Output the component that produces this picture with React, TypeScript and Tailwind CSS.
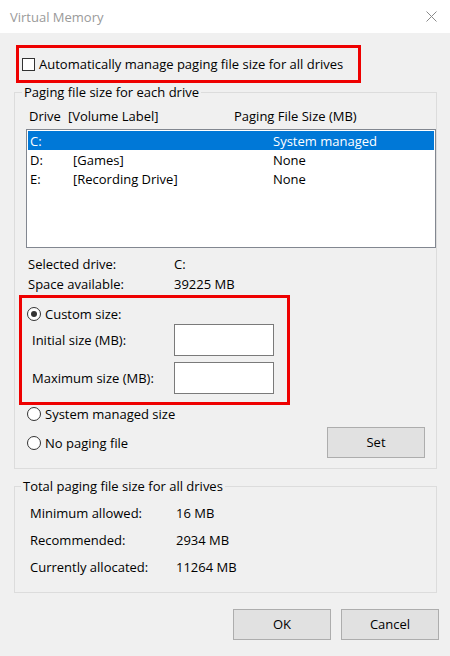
import React from "react";

const font = { fontFamily: '"Open Sans", "Noto Sans", sans-serif' };

function CheckBox() {
  return <span className="block w-[13px] h-[13px] border border-[#333333] bg-white shrink-0" />;
}

function Radio({ checked = false }: { checked?: boolean }) {
  return (
    <span className="flex items-center justify-center w-[14px] h-[14px] rounded-full border border-[#333333] bg-white shrink-0">
      {checked && <span className="block w-[6px] h-[6px] rounded-full bg-[#333333]" />}
    </span>
  );
}

function WinButton({ children }: { children: React.ReactNode }) {
  return (
    <button className="w-[98px] h-[31px] border border-[#adadad] bg-[#e1e1e1] text-black leading-none">
      {children}
    </button>
  );
}

const drives = [
  { letter: "C:", label: "", size: "System managed", selected: true },
  { letter: "D:", label: "[Games]", size: "None", selected: false },
  { letter: "E:", label: "[Recording Drive]", size: "None", selected: false },
];

export default function App() {
  return (
    <div
      className="w-[450px] h-[656px] bg-[#f0f0f0] text-black text-[13px] leading-[18px] flex flex-col overflow-hidden"
      style={font}
    >
      {/* Title bar */}
      <div className="h-[33px] bg-white flex items-center justify-between pl-[10px] pr-[13px] shrink-0">
        <span className="text-[#9a9a9a]">Virtual Memory</span>
        <svg width="11" height="11" viewBox="0 0 11 11" className="text-[#8a8a8a]">
          <path d="M0.5 0.5 L10.5 10.5 M10.5 0.5 L0.5 10.5" stroke="currentColor" strokeWidth="1" />
        </svg>
      </div>

      <div className="flex flex-col pl-[14px] pr-[13px]">
        {/* Auto manage */}
        <div className="mt-[12px] ml-[2px] w-[345px] h-[38px] border-[3px] border-[#ee0000] flex items-center pl-[3px] gap-[4px]">
          <CheckBox />
          <span>Automatically manage paging file size for all drives</span>
        </div>

        {/* Paging file size for each drive */}
        <fieldset className="border border-[#dcdcdc] pb-[10px]">
          <legend className="ml-[7px] px-[2px]">Paging file size for each drive</legend>
          <div className="mt-[6px] pl-[14px] flex h-[18px] items-center">
            <span className="w-[39px]">Drive</span>
            <span className="w-[166px]">[Volume Label]</span>
            <span>Paging File Size (MB)</span>
          </div>
          <div className="mt-[4px] ml-[11px] w-[410px] h-[119px] border border-[#828790] bg-white p-[1px]">
            {drives.map((d) => (
              <div
                key={d.letter}
                className={`h-[19px] flex items-center pl-[2px] ${d.selected ? "bg-[#0078d7] text-white" : ""}`}
              >
                <span className="w-[43px]">{d.letter}</span>
                <span className="w-[200px]">{d.label}</span>
                <span>{d.size}</span>
              </div>
            ))}
          </div>

          <div className="mt-[6px] pl-[13px] flex h-[20px] items-center">
            <span className="w-[146px]">Selected drive:</span>
            <span>C:</span>
          </div>
          <div className="pl-[13px] flex h-[20px] items-center">
            <span className="w-[146px]">Space available:</span>
            <span>39225 MB</span>
          </div>

          {/* Custom size */}
          <div className="mt-[1px] ml-[4px] w-[271px] h-[110px] border-[3px] border-[#ee0000] pt-[6px] pb-[8px]">
            <div className="h-[20px] flex items-center pl-[5px] gap-[4px]">
              <Radio checked />
              <span>Custom size:</span>
            </div>
            <div className="h-[32px] flex items-center pl-[10px]">
              <span className="w-[142px]">Initial size (MB):</span>
              <input className="w-[100px] h-[32px] border border-[#7a7a7a] bg-white outline-none" />
            </div>
            <div className="mt-[6px] h-[32px] flex items-center pl-[10px]">
              <span className="w-[142px]">Maximum size (MB):</span>
              <input className="w-[100px] h-[32px] border border-[#7a7a7a] bg-white outline-none" />
            </div>
          </div>

          <div className="h-[18px] flex items-center pl-[12px] gap-[4px]">
            <Radio />
            <span>System managed size</span>
          </div>
          <div className="mt-[4px] h-[31px] flex items-center justify-between pl-[12px] pr-[11px]">
            <div className="flex items-center gap-[4px]">
              <Radio />
              <span>No paging file</span>
            </div>
            <WinButton>Set</WinButton>
          </div>
        </fieldset>

        {/* Totals */}
        <fieldset className="mt-[8px] border border-[#dcdcdc] pb-[15px]">
          <legend className="ml-[6px] px-[2px]">Total paging file size for all drives</legend>
          <div className="mt-[8px] pl-[15px] flex flex-col gap-[7px]">
            <div className="h-[20px] flex items-center">
              <span className="w-[146px]">Minimum allowed:</span>
              <span>16 MB</span>
            </div>
            <div className="h-[20px] flex items-center">
              <span className="w-[146px]">Recommended:</span>
              <span>2934 MB</span>
            </div>
            <div className="h-[20px] flex items-center">
              <span className="w-[146px]">Currently allocated:</span>
              <span>11264 MB</span>
            </div>
          </div>
        </fieldset>

        <div className="mt-[16px] -mr-[2px] flex justify-end gap-[10px]">
          <WinButton>OK</WinButton>
          <WinButton>Cancel</WinButton>
        </div>
      </div>
    </div>
  );
}
